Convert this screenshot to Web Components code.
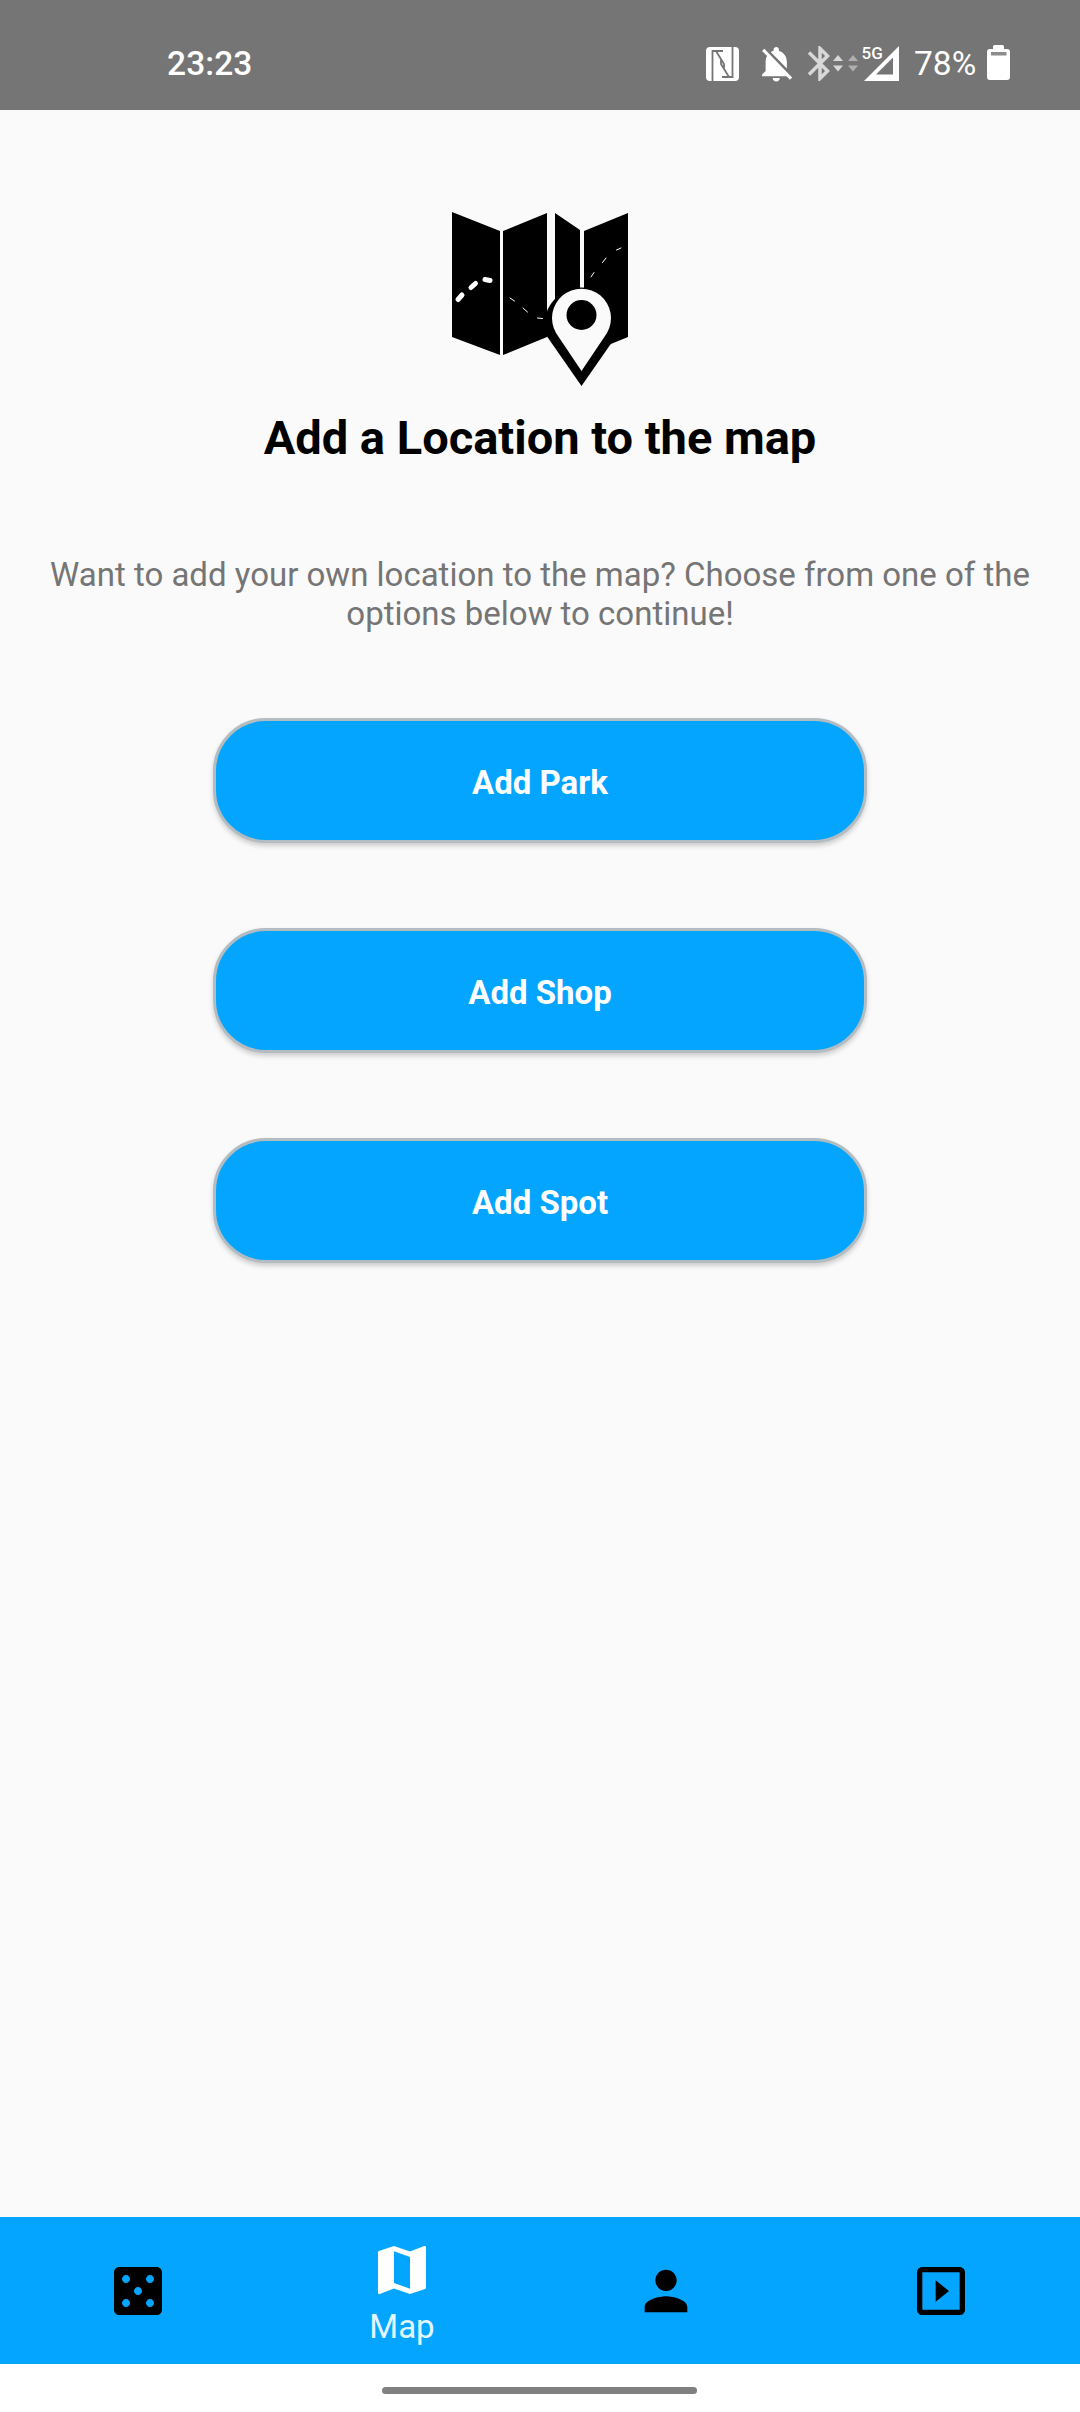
<!doctype html>
<html><head><meta charset="utf-8">
<style>
html,body{margin:0;padding:0;height:100%}
body{width:1080px;height:2412px;font-family:Roboto,"Liberation Sans",sans-serif;background:#fafafa;display:flex;flex-direction:column;overflow:hidden}
</style></head>
<body>
<status-bar></status-bar>
<add-page>
  <map-hero slot="hero"></map-hero>
  <span slot="title">Add a Location to the map</span>
  <span slot="text">Want to add your own location to the map? Choose from one of the options below to continue!</span>
  <action-button>Add Park</action-button>
  <action-button>Add Shop</action-button>
  <action-button>Add Spot</action-button>
</add-page>
<bottom-nav>
  <nav-item w="275" icon="casino"></nav-item>
  <nav-item w="254" icon="map" active label="Map"></nav-item>
  <nav-item w="273" icon="person"></nav-item>
  <nav-item w="278" icon="play"></nav-item>
</bottom-nav>
<gesture-bar></gesture-bar>
<script>
function def(name, html, init){
  customElements.define(name, class extends HTMLElement{
    constructor(){super();this.attachShadow({mode:'open'}).innerHTML=html;}
    connectedCallback(){ if(init) init(this); }
  });
}
def('status-bar',`<style>
:host{display:flex;align-items:flex-start;height:110px;background:#757575;color:#fff;flex:none;box-sizing:border-box;padding-left:167px}
.t{font-size:33.5px;font-weight:500;line-height:39px;margin-top:44px;letter-spacing:.1px}
.r{margin-left:auto;display:flex;align-items:flex-start;padding-right:70px}
svg{display:block;margin-top:40px;margin-right:7px}
.p{font-size:33.5px;line-height:39px;margin-top:44px;margin-right:12px;width:61px;white-space:nowrap}
.b{margin-top:40px;margin-right:0}
</style><div class="t">23:23</div><div class="r">
<svg width="201" height="48" viewBox="706 40 201 48">
<rect x="706" y="47" width="33" height="34" rx="4" fill="#fff"/>
<path d="M712.500 81V51H723M732.500 47V77H722M716 51L724 64V69M729 77L721 64V59" fill="none" stroke="#757575" stroke-width="1.800"/>
<path transform="translate(755 42.600) scale(1.770)" fill="#fff" d="M20 18.690L7.840 6.140 5.270 3.490 4 4.760l2.800 2.800v.010c-.520.990-.800 2.160-.800 3.420v5l-2 2v1h13.730l2 2L21 19.720l-1-1.030zM12 22c1.110 0 2-.890 2-2h-4c0 1.110.890 2 2 2zm6-7.320V11c0-3.080-1.640-5.640-4.500-6.320V4c0-.830-.670-1.500-1.500-1.500s-1.500.670-1.500 1.500v.680c-.150.030-.290.080-.420.120-.100.030-.200.070-.300.110h-.010c-.200.080-.400.170-.590.270-.110.050-.210.100-.310.170L18 14.680z"/>
<path transform="translate(799 42.500) scale(1.750)" fill="#fff" opacity=".72" d="M17.710 7.710L12 2h-1v7.590L6.410 5 5 6.410 10.590 12 5 17.590 6.410 19 11 14.410V22h1l5.710-5.710-4.300-4.290 4.300-4.290zM13 5.830l1.880 1.880L13 9.590V5.830zm1.880 10.460L13 18.170v-3.760l1.880 1.880z"/>
<path d="M833 61L838 55L843 61ZM833 65.500H843L838 71.500Z" fill="#fff" opacity=".72"/>
<path d="M848 61L853 55L858 61ZM848 65.500H858L853 71.500Z" fill="#fff" opacity=".42"/>
<text x="861.500" y="59" font-family="Roboto" font-weight="500" font-size="17" fill="#fff">5G</text>
<path fill-rule="evenodd" d="M864 81L899 46V81ZM876 74.500H893V57.500Z" fill="#fff"/>
</svg>
<div class="p">78%</div>
<svg class="b" width="23" height="48" viewBox="987 40 23 48"><path fill="#fff" d="M993 49v-2.500q0-1.500 1.500-1.500h8q1.500 0 1.500 1.500V49h3q3 0 3 3v25q0 3-3 3h-17q-3 0-3-3V52q0-3 3-3z"/><rect x="991" y="52" width="15.500" height="3.500" fill="#8c8c8c"/></svg>
</div>`);
def('map-hero',`<style>:host{display:block;width:220px;height:200px}svg{display:block}</style>
<svg width="220" height="200" viewBox="0 0 220 200">
<path d="M22 17L70 36V160L22 142ZM73 36L117 18V142L73 160ZM125 18L150 35V110H125ZM154 36L198 18V142L154 160Z"/>
<path d="M151.500 191L116 140A37 37 0 1 1 187 140Z"/>
<rect x="150" y="30" width="4" height="54" fill="#fafafa"/>
<g fill="none" stroke="#fff" stroke-linecap="round">
<path d="M28 104.500L32 100M41 92.500L45.500 88.500M55 84.500L60 85.500" stroke-width="5"/>
<path d="M80 103L84.500 106M93 113L97.500 117M107.500 123L112.500 123.500M161 82L164 77.500M172.500 67.500L176 63M186.500 55L191 53" stroke-width="1"/>
</g>
<path fill="#fafafa" d="M151.500 176L126 138A29.500 29.500 0 1 1 177 138Z"/>
<circle cx="151.500" cy="120" r="15"/>
</svg>`);
def('add-page',`<style>
:host{display:flex;flex-direction:column;align-items:center;flex:1;padding-top:85px;box-sizing:border-box}
h1{margin:16px 0 0;font-size:47px;line-height:54px;font-weight:700;color:#000}
p{margin:90px 0 0;width:1010px;text-align:center;font-size:33px;line-height:39px;color:#757575;font-weight:400}
.b{display:flex;flex-direction:column;gap:85px;margin-top:85px}
</style><slot name="hero"></slot><h1><slot name="title"></slot></h1><p><slot name="text"></slot></p><div class="b"><slot></slot></div>`);
def('action-button',`<style>
:host{display:flex;align-items:center;justify-content:center;box-sizing:border-box;width:654px;height:125px;padding-top:3px;border-radius:53px;background:#03a5ff;border:3px solid #b3bcc1;box-shadow:0 3px 5px rgba(0,0,0,.18);color:#fff;font-size:33px;font-weight:700}
</style><slot></slot>`);
def('bottom-nav',`<style>:host{display:flex;flex:none;height:147px;background:#03a5ff}</style><slot></slot>`);
const ICONS={
casino:'M19 3H5c-1.100 0-2 .900-2 2v14c0 1.100.900 2 2 2h14c1.100 0 2-.900 2-2V5c0-1.100-.900-2-2-2zM7.500 18c-.830 0-1.500-.670-1.500-1.500S6.670 15 7.500 15s1.500.670 1.500 1.500S8.330 18 7.500 18zm0-9C6.670 9 6 8.330 6 7.500S6.670 6 7.500 6 9 6.670 9 7.500 8.330 9 7.500 9zm4.500 4.500c-.830 0-1.500-.670-1.500-1.500s.670-1.500 1.500-1.500 1.500.670 1.500 1.500-.670 1.500-1.500 1.500zm4.500 4.500c-.830 0-1.500-.670-1.500-1.500s.670-1.500 1.500-1.500 1.500.670 1.500 1.500-.670 1.500-1.500 1.500zm0-9c-.830 0-1.500-.670-1.500-1.500S15.670 6 16.500 6s1.500.670 1.500 1.500S17.330 9 16.500 9z',
map:'M20.500 3l-.160.030L15 5.100 9 3 3.360 4.900c-.210.070-.360.250-.360.480V20.500c0 .280.220.500.500.500l.160-.030L9 18.900l6 2.100 5.640-1.900c.210-.070.360-.250.360-.480V3.500c0-.280-.220-.500-.500-.500zM15 19l-6-2.110V5l6 2.110V19z',
person:'M12 12c2.210 0 4-1.790 4-4s-1.790-4-4-4-4 1.790-4 4 1.790 4 4 4zm0 2c-2.670 0-8 1.340-8 4v2h16v-2c0-2.660-5.330-4-8-4z',
play:'M10 8v8l5-4-5-4zm9-5H5c-1.100 0-2 .900-2 2v14c0 1.100.900 2 2 2h14c1.100 0 2-.900 2-2V5c0-1.100-.900-2-2-2zm0 16H5V5h14v14z'};
def('nav-item',`<style>
:host{display:flex;flex-direction:column;align-items:center;box-sizing:border-box;padding-top:42px;color:#000}
:host([active]){padding-top:21px;color:#fff}
svg{display:block;flex:none}
.l{font-size:33px;line-height:38px;margin-top:6px;color:#e3f5ff;font-weight:400}
</style><svg width="64" height="64" viewBox="0 0 24 24"><path fill="currentColor"/></svg><div class="l"></div>`, el=>{
  const s=el.shadowRoot;
  el.style.width=el.getAttribute('w')+'px';
  s.querySelector('path').setAttribute('d',ICONS[el.getAttribute('icon')]);
  const l=s.querySelector('.l');
  if(el.hasAttribute('label')) l.textContent=el.getAttribute('label'); else l.remove();
});
def('gesture-bar',`<style>:host{display:flex;flex:none;height:48px;background:#fff;justify-content:center;align-items:flex-start}
i{display:block;width:315px;height:7px;margin:23px 2px 0 0;border-radius:4px;background:#808080}</style><i></i>`);
</script>
</body></html>
